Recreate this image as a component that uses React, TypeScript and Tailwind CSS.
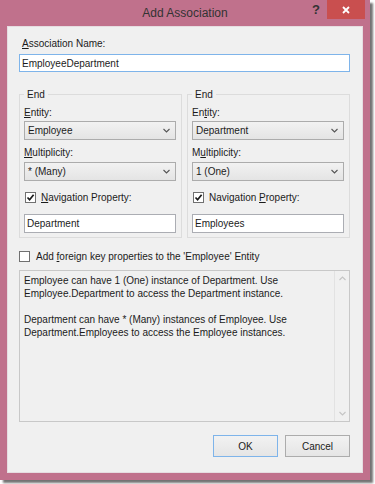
const ui = "font-['Liberation_Sans',Arial,sans-serif] text-[10px] leading-[13px] text-[#1b1b1b]";

const Chevron = ({ up = false, color = '#555' }: { up?: boolean; color?: string }) => (
    <svg width="7" height="5" viewBox="0 0 7 5" className={up ? 'rotate-180' : ''}>
        <path d="M0.5 1 L3.5 4 L6.5 1" fill="none" stroke={color} strokeWidth="1.1" />
    </svg>
);

const Combo = ({ value }: { value: string }) => (
    <div className="flex h-[19px] items-center justify-between border border-[#acacac] bg-gradient-to-b from-[#f2f2f2] to-[#e4e4e4] pl-[3px] pr-[5px]">
        <span>{value}</span>
        <Chevron />
    </div>
);

const CheckBox = ({ checked }: { checked: boolean }) => (
    <div className="flex h-[11px] w-[11px] items-center justify-center border border-[#707070] bg-white">
        {checked && (
            <svg width="9" height="9" viewBox="0 0 9 9">
                <path d="M1.5 4.5 L3.6 6.8 L7.6 1.8" fill="none" stroke="#1a1a1a" strokeWidth="1.7" />
            </svg>
        )}
    </div>
);

const EndGroup = ({
    entity,
    multiplicity,
    nav,
    labels,
}: {
    entity: string;
    multiplicity: string;
    nav: string;
    labels: [React.ReactNode, React.ReactNode, React.ReactNode];
}) => (
    <fieldset className="border border-[#dcdcdc] pl-[4px] pr-[5px] pb-[4px]">
        <legend className="px-[3px]">End</legend>
        <div className="mt-[5px]">{labels[0]}</div>
        <div className="mt-[2px]">
            <Combo value={entity} />
        </div>
        <div className="mt-[6px]">{labels[1]}</div>
        <div className="mt-[3px]">
            <Combo value={multiplicity} />
        </div>
        <div className="mt-[10px] flex items-center gap-[5px] pl-[1px]">
            <CheckBox checked />
            <span>{labels[2]}</span>
        </div>
        <div className="mt-[10px] flex h-[19px] items-center border border-[#abadb3] bg-white px-[2px]">{nav}</div>
    </fieldset>
);

const App = () => {
    return (
        <div className={`h-[484px] w-[375px] bg-white ${ui}`}>
            <div className="flex h-[480px] w-[370px] flex-col bg-[#c0718c] px-[7px] pb-[7px] shadow-[3px_3px_2px_rgba(0,0,0,0.55)]">
                {/* title bar */}
                <div className="relative -mx-[7px] flex h-[26px] items-center justify-center">
                    <span className="text-[12px] text-[#333]">Add Association</span>
                    <span className="absolute left-[312px] top-[3px] text-[13px] font-bold text-[#333]">?</span>
                    <div className="absolute right-[5px] top-0 flex h-[19px] w-[38px] items-center justify-center bg-[#c94f4f]">
                        <svg width="8" height="8" viewBox="0 0 8 8">
                            <path d="M1 1 L7 7 M7 1 L1 7" stroke="#fff" strokeWidth="1.8" />
                        </svg>
                    </div>
                </div>

                {/* body */}
                <div className="flex flex-1 flex-col border border-[#e6dde1] bg-[#f0f0f0] pl-[11px] pr-[12px] pt-[10px]">
                    <div className="pl-[3px]">
                        <u>A</u>ssociation Name:
                    </div>
                    <div className="mt-[4px] flex h-[18px] items-center border border-[#7eb4ea] bg-white px-[2px]">
                        EmployeeDepartment
                    </div>

                    <div className="mt-[16px] grid grid-cols-2 gap-[5px]">
                        <EndGroup
                            entity="Employee"
                            multiplicity="* (Many)"
                            nav="Department"
                            labels={[
                                <><u>E</u>ntity:</>,
                                <><u>M</u>ultiplicity:</>,
                                <><u>N</u>avigation Property:</>,
                            ]}
                        />
                        <EndGroup
                            entity="Department"
                            multiplicity="1 (One)"
                            nav="Employees"
                            labels={[
                                <>En<u>t</u>ity:</>,
                                <>M<u>u</u>ltiplicity:</>,
                                <>Navigation <u>P</u>roperty:</>,
                            ]}
                        />
                    </div>

                    <div className="mt-[12px] flex items-center gap-[6px]">
                        <CheckBox checked={false} />
                        <span>
                            Add <u>f</u>oreign key properties to the 'Employee' Entity
                        </span>
                    </div>

                    <div className="mt-[7px] flex h-[152px] border border-[#c8c8c8]">
                        <div className="flex-1 px-[4px] pt-[3px]">
                            <p>Employee can have 1 (One) instance of Department. Use</p>
                            <p>Employee.Department to access the Department instance.</p>
                            <p className="mt-[13px]">Department can have * (Many) instances of Employee. Use</p>
                            <p>Department.Employees to access the Employee instances.</p>
                        </div>
                        <div className="flex w-[15px] flex-col items-center justify-between border-l border-[#e2e2e2] py-[5px]">
                            <Chevron up color="#c4c4c4" />
                            <Chevron color="#c4c4c4" />
                        </div>
                    </div>

                    <div className="mt-[13px] flex justify-end gap-[7px]">
                        <button className="h-[22px] w-[65px] border border-[#7eb4ea] bg-gradient-to-b from-[#f2f2f2] to-[#e5e5e5]">
                            OK
                        </button>
                        <button className="h-[22px] w-[65px] border border-[#acacac] bg-gradient-to-b from-[#f2f2f2] to-[#e5e5e5]">
                            Cancel
                        </button>
                    </div>
                </div>
            </div>
        </div>
    );
};

export default App;
